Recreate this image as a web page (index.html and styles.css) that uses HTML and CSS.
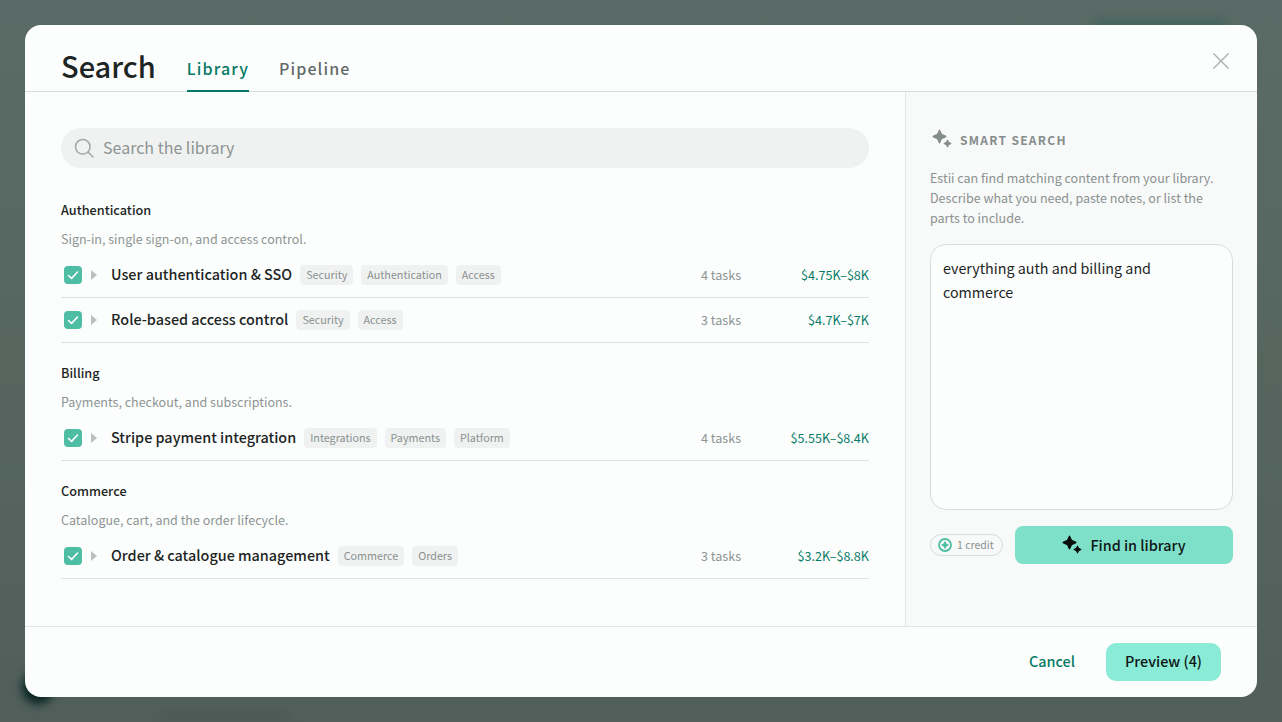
FILE: index.html
```html
<!DOCTYPE html>
<html lang="en">
<head>
  <meta charset="UTF-8">
  <meta name="viewport" content="width=device-width, initial-scale=1.0">
  <title>Search</title>
  <link rel="stylesheet" href="styles.css">
</head>
<body>

<svg class="icon-defs" width="0" height="0">
  <symbol id="sparkle" viewBox="0 0 20 20">
    <path d="M7.5 1.2 L9.5 5.5 L13.8 7.5 L9.5 9.5 L7.5 13.8 L5.5 9.5 L1.2 7.5 L5.5 5.5 Z" stroke-width="1.4" stroke-linejoin="round"/>
    <path d="M15.5 11.2 L16.6 13.4 L18.8 14.5 L16.6 15.6 L15.5 17.8 L14.4 15.6 L12.2 14.5 L14.4 13.4 Z" stroke-width="1.2" stroke-linejoin="round"/>
  </symbol>
  <symbol id="check" viewBox="0 0 18 18">
    <path d="M4.5 9.5 L7.6 12.4 L13.5 6" fill="none" stroke="#fff" stroke-width="1.6" stroke-linecap="round" stroke-linejoin="round"/>
  </symbol>
</svg>

<div class="backdrop">
  <div class="blur-spot spot-corner"></div>
  <div class="blur-spot spot-top"></div>
  <div class="blur-spot spot-text"></div>

  <div class="modal">
    <header class="modal-header">
      <h1>Search</h1>
      <nav class="tabs">
        <a class="tab active">Library</a>
        <a class="tab">Pipeline</a>
      </nav>
      <button class="close" aria-label="Close">
        <svg width="18" height="18" viewBox="0 0 18 18"><path d="M1.5 1.5 L16.5 16.5 M16.5 1.5 L1.5 16.5" stroke="#a9aeae" stroke-width="1.4" fill="none"/></svg>
      </button>
    </header>

    <div class="modal-body">
      <main class="library">
        <div class="search-box">
          <svg width="20" height="20" viewBox="0 0 20 20"><circle cx="8.8" cy="8.8" r="7.3" fill="none" stroke="#a3a8a8" stroke-width="1.5"/><path d="M14 14 L19 19" stroke="#a3a8a8" stroke-width="1.5" stroke-linecap="round"/></svg>
          <span class="search-text">Search the library</span>
        </div>

        <section class="group">
          <h3>Authentication</h3>
          <p>Sign-in, single sign-on, and access control.</p>
          <div class="row">
            <span class="checkbox"><svg width="18" height="18"><use href="#check"/></svg></span>
            <span class="caret"></span>
            <span class="name">User authentication &amp; SSO</span>
            <span class="tag">Security</span>
            <span class="tag">Authentication</span>
            <span class="tag">Access</span>
            <span class="tasks">4 tasks</span>
            <span class="price">$4.75K–$8K</span>
          </div>
          <div class="row">
            <span class="checkbox"><svg width="18" height="18"><use href="#check"/></svg></span>
            <span class="caret"></span>
            <span class="name">Role-based access control</span>
            <span class="tag">Security</span>
            <span class="tag">Access</span>
            <span class="tasks">3 tasks</span>
            <span class="price">$4.7K–$7K</span>
          </div>
        </section>

        <section class="group">
          <h3>Billing</h3>
          <p>Payments, checkout, and subscriptions.</p>
          <div class="row">
            <span class="checkbox"><svg width="18" height="18"><use href="#check"/></svg></span>
            <span class="caret"></span>
            <span class="name">Stripe payment integration</span>
            <span class="tag">Integrations</span>
            <span class="tag">Payments</span>
            <span class="tag">Platform</span>
            <span class="tasks">4 tasks</span>
            <span class="price">$5.55K–$8.4K</span>
          </div>
        </section>

        <section class="group">
          <h3>Commerce</h3>
          <p>Catalogue, cart, and the order lifecycle.</p>
          <div class="row">
            <span class="checkbox"><svg width="18" height="18"><use href="#check"/></svg></span>
            <span class="caret"></span>
            <span class="name">Order &amp; catalogue management</span>
            <span class="tag">Commerce</span>
            <span class="tag">Orders</span>
            <span class="tasks">3 tasks</span>
            <span class="price">$3.2K–$8.8K</span>
          </div>
        </section>
      </main>

      <aside class="smart">
        <div class="smart-title">
          <svg class="smart-icon" width="20" height="20"><use href="#sparkle"/></svg>
          <span>SMART SEARCH</span>
        </div>
        <p class="smart-desc">Estii can find matching content from your library. Describe what you need, paste notes, or list the parts to include.</p>
        <textarea class="smart-input">everything auth and billing and commerce</textarea>
        <div class="smart-actions">
          <span class="credit">
            <svg width="14" height="14" viewBox="0 0 14 14"><circle cx="7" cy="7" r="6" fill="none" stroke="#4dbda3" stroke-width="1.8"/><path d="M7 2.8 L8.4 5.6 L11.2 7 L8.4 8.4 L7 11.2 L5.6 8.4 L2.8 7 L5.6 5.6 Z" fill="#4dbda3"/></svg>
            1 credit
          </span>
          <button class="find-btn">
            <svg class="find-icon" width="20" height="20"><use href="#sparkle"/></svg>
            <span class="find-label">Find in library</span>
          </button>
        </div>
      </aside>
    </div>

    <footer class="modal-footer">
      <button class="cancel">Cancel</button>
      <button class="preview">Preview (4)</button>
    </footer>
  </div>
</div>

</body>
</html>
```

FILE: styles.css
```css
* {
  box-sizing: border-box;
}
body {
  margin: 0;
  font-family: "Noto Sans CJK SC", "Noto Sans", sans-serif;
  color: #1c2524;
}
h1, h3, p {
  margin: 0;
}
button {
  font: inherit;
  border: none;
  background: none;
  cursor: pointer;
}
.icon-defs {
  position: absolute;
}

.backdrop {
  position: relative;
  height: 722px;
  padding: 25px;
  overflow: hidden;
  background: linear-gradient(180deg, #5a6a66 0%, #56665f 50%, #515f5b 100%);
}
.blur-spot {
  position: absolute;
  filter: blur(5px);
}
.spot-corner {
  left: 22px;
  top: 671px;
  width: 32px;
  height: 33px;
  border-radius: 50%;
  background: #06241f;
}
.spot-top {
  left: 1095px;
  top: 21px;
  width: 130px;
  height: 8px;
  background: #3a6459;
}
.spot-text {
  left: 160px;
  top: 714px;
  width: 130px;
  height: 6px;
  background: #4a5752;
}

.modal {
  position: relative;
  height: 672px;
  display: flex;
  flex-direction: column;
  background: #fcfefd;
  border-radius: 16px;
  overflow: hidden;
}

.modal-header {
  height: 67px;
  flex: none;
  display: flex;
  align-items: flex-end;
  padding: 0 36px;
  border-bottom: 1px solid #d8dcdb;
}
.modal-header h1 {
  font-size: 29px;
  line-height: 44px;
  font-weight: 500;
  margin-bottom: 4px;
}
.tabs {
  display: flex;
  gap: 30px;
  margin-left: 31px;
}
.tab {
  display: block;
  height: 36px;
  margin-bottom: -1px;
  font-size: 16px;
  line-height: 24px;
  font-weight: 500;
  letter-spacing: 1.1px;
  color: #626b6a;
}
.tab.active {
  color: #067a66;
  border-bottom: 2px solid #067a66;
}
.close {
  margin-left: auto;
  margin-bottom: 21px;
  margin-right: -9px;
  padding: 0;
  height: 18px;
  line-height: 0;
}

.modal-body {
  flex: 1;
  display: flex;
  min-height: 0;
}
.library {
  flex: 1;
  padding: 36px 36px 0;
}
.search-box {
  height: 40px;
  display: flex;
  align-items: center;
  gap: 9px;
  padding-left: 13px;
  border-radius: 20px;
  background: #f0f1f1;
  font-size: 16px;
  color: #8d9493;
  margin-bottom: 32px;
}
.search-text {
  line-height: 24px;
  margin-bottom: 2px;
}

.group {
  margin-bottom: 20px;
}
.group h3 {
  font-size: 12.7px;
  line-height: 20px;
  font-weight: 500;
  color: #1c2524;
  margin-bottom: 9px;
}
.group p {
  font-size: 12.5px;
  line-height: 20px;
  color: #8d9493;
  margin-bottom: 4px;
}

.row {
  height: 45px;
  display: flex;
  align-items: center;
  border-bottom: 1px solid #dfe2e1;
  padding-left: 3px;
}
.checkbox {
  width: 18px;
  height: 18px;
  flex: none;
  border-radius: 4px;
  background: #4dbda3;
  line-height: 0;
}
.caret {
  width: 0;
  height: 0;
  flex: none;
  margin-left: 9px;
  margin-right: 14px;
  border-left: 6px solid #bcc0c0;
  border-top: 5px solid transparent;
  border-bottom: 5px solid transparent;
}
.name {
  font-size: 14.4px;
  line-height: 20px;
  font-weight: 500;
  margin-right: 8px;
  margin-bottom: 2px;
}
.tag {
  height: 20px;
  margin-right: 8px;
  padding: 0 6px;
  border-radius: 4px;
  background: #f0f1f1;
  font-size: 10.75px;
  line-height: 20px;
  color: #8a9190;
}
.tasks {
  margin-left: auto;
  width: 40px;
  font-size: 12.6px;
  line-height: 20px;
  color: #8d9493;
  white-space: nowrap;
}
.price {
  width: 128px;
  text-align: right;
  font-size: 12.6px;
  line-height: 20px;
  color: #067a66;
}

.smart {
  width: 352px;
  flex: none;
  padding: 35px 24px 0 24px;
  background: #f8f9f9;
  border-left: 1px solid #e2e5e4;
}
.smart-title {
  display: flex;
  align-items: center;
  gap: 8px;
  height: 24px;
  padding-left: 2px;
  font-size: 12px;
  font-weight: 700;
  letter-spacing: 1.3px;
  color: #858d8c;
}
.smart-icon {
  fill: #858d8c;
  stroke: #858d8c;
}
.smart-desc {
  margin-top: 17px;
  font-size: 12.5px;
  line-height: 20px;
  color: #8a9190;
}
.smart-input {
  display: block;
  width: 303px;
  height: 266px;
  margin-top: 16px;
  padding: 11px 12px;
  resize: none;
  border: 1px solid #d8dcdb;
  border-radius: 16px;
  background: #fcfefd;
  font-family: inherit;
  font-size: 14.3px;
  line-height: 24px;
  color: #1c2524;
  outline: none;
}
.smart-actions {
  display: flex;
  align-items: center;
  justify-content: space-between;
  margin-top: 16px;
}
.credit {
  width: 73px;
  height: 22px;
  display: flex;
  align-items: center;
  gap: 5px;
  padding-left: 7px;
  border: 1px solid #d8dcdb;
  border-radius: 11px;
  font-size: 10.5px;
  line-height: 20px;
  color: #8a9190;
}
.find-btn {
  width: 218px;
  height: 38px;
  display: flex;
  align-items: center;
  justify-content: center;
  gap: 8px;
  border-radius: 8px;
  background: #7fe0ca;
  font-size: 14.4px;
  font-weight: 500;
  color: #0e1615;
}
.find-label {
  margin-bottom: 2px;
}
.find-icon {
  fill: #0a0f0e;
  stroke: #0a0f0e;
}

.modal-footer {
  height: 71px;
  flex: none;
  display: flex;
  align-items: center;
  justify-content: flex-end;
  padding: 0 36px 1px;
  border-top: 1px solid #e2e5e4;
}
.cancel {
  padding: 0 0 2px;
  font-size: 14.4px;
  font-weight: 500;
  color: #067a66;
  margin-right: 31px;
}
.preview {
  width: 115px;
  height: 38px;
  padding: 0 0 2px;
  border-radius: 10px;
  background: #8aebd6;
  font-size: 14.4px;
  font-weight: 500;
  color: #0e1615;
}
```
